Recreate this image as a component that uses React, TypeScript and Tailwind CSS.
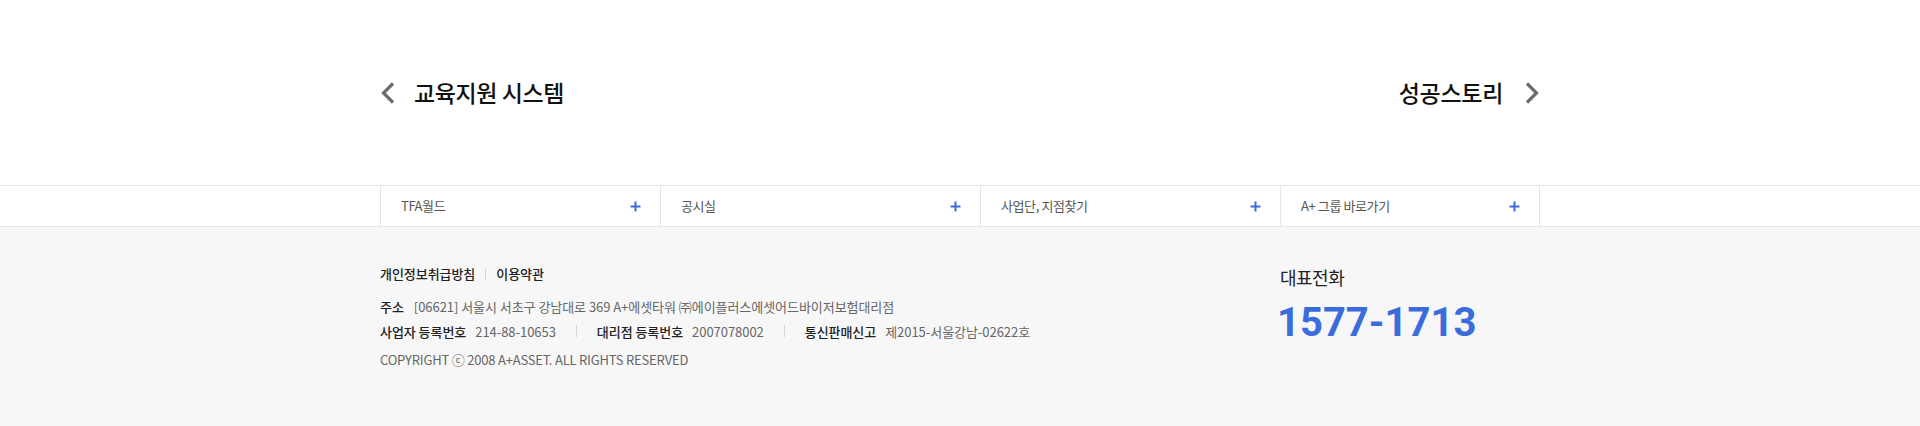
const KR = "font-['Noto_Sans_CJK_KR','Noto_Sans',sans-serif]";

const tabs = [
  { label: "TFA월드", w: "w-[280px]" },
  { label: "공시실", w: "w-[320px]" },
  { label: "사업단, 지점찾기", w: "w-[300px]" },
  { label: "A+ 그룹 바로가기", w: "w-[260px]" },
];

const Chevron = ({ dir }: { dir: "left" | "right" }) => (
  <svg width="16" height="24" viewBox="0 0 16 24" fill="none">
    <path
      d={dir === "left" ? "M13 2.5 L3.5 12 L13 21.5" : "M3 2.5 L12.5 12 L3 21.5"}
      stroke="#6b6b6b"
      strokeWidth="3.2"
    />
  </svg>
);

const PlusIcon = () => (
  <svg width="11" height="11" viewBox="0 0 11 11">
    <path d="M5.5 0.5 V10.5 M0.5 5.5 H10.5" stroke="#3a6ddb" strokeWidth="2" />
  </svg>
);

const Divider = () => <span className="mx-[10px] inline-block h-[12px] w-px bg-[#d5d5d5]" />;

export default function App() {
  return (
    <div className={`${KR} w-full bg-white`}>
      {/* prev / next */}
      <div className="mx-auto flex h-[185px] w-[1160px] items-center justify-between">
        <a className="flex items-center gap-[18px] text-[23px] font-medium tracking-[-0.4px] text-[#111]">
          <Chevron dir="left" />
          <span>교육지원 시스템</span>
        </a>
        <a className="flex items-center gap-[21px] text-[23px] font-medium tracking-[-0.3px] text-[#111]">
          <span>성공스토리</span>
          <Chevron dir="right" />
        </a>
      </div>

      {/* quick links */}
      <div className="border-y border-[#e6e6e6]">
        <ul className="mx-auto flex w-[1160px]">
          {tabs.map((t, i) => (
            <li
              key={t.label}
              className={`${t.w} flex h-[40px] items-center justify-between border-l border-[#e6e6e6] pl-[20px] pr-[19px] ${
                i === tabs.length - 1 ? "border-r" : ""
              }`}
            >
              <span className="text-[13px] tracking-[-0.4px] text-[#555]">{t.label}</span>
              <PlusIcon />
            </li>
          ))}
        </ul>
      </div>

      {/* footer */}
      <footer className="h-[199px] bg-[#f7f7f7]">
        <div className="mx-auto flex w-[1160px] pt-[37px]">
          <div className="flex-1 text-[13px] tracking-[-0.05px]">
            <div className="flex items-center font-medium text-[#222]">
              <span>개인정보취급방침</span>
              <Divider />
              <span>이용약관</span>
            </div>
            <div className="mt-[10px] leading-[25px] text-[#666]">
              <p>
                <b className="mr-[10px] font-medium text-[#222]">주소</b>
                [06621] 서울시 서초구 강남대로 369 A+에셋타워 ㈜에이플러스에셋어드바이저보험대리점
              </p>
              <p className="flex items-center">
                <b className="mr-[9px] font-medium text-[#222]">사업자 등록번호</b>
                <span>214-88-10653</span>
                <span className="mx-[20px] inline-block h-[12px] w-px bg-[#d5d5d5]" />
                <b className="mr-[9px] font-medium text-[#222]">대리점 등록번호</b>
                <span>2007078002</span>
                <span className="mx-[20px] inline-block h-[12px] w-px bg-[#d5d5d5]" />
                <b className="mr-[9px] font-medium text-[#222]">통신판매신고</b>
                <span>제2015-서울강남-02622호</span>
              </p>
              <p className="mt-[3px] tracking-[-0.2px]">COPYRIGHT ⓒ 2008 A+ASSET. ALL RIGHTS RESERVED</p>
            </div>
          </div>
          <div className="w-[260px]">
            <p className="text-[18px] tracking-[-0.5px] text-[#222]">대표전화</p>
            <p className="-ml-[3px] mt-[8px] font-['Roboto',sans-serif] text-[40px] font-bold leading-[48px] text-[#3a6ddb]">
              1577-1713
            </p>
          </div>
        </div>
      </footer>
    </div>
  );
}
